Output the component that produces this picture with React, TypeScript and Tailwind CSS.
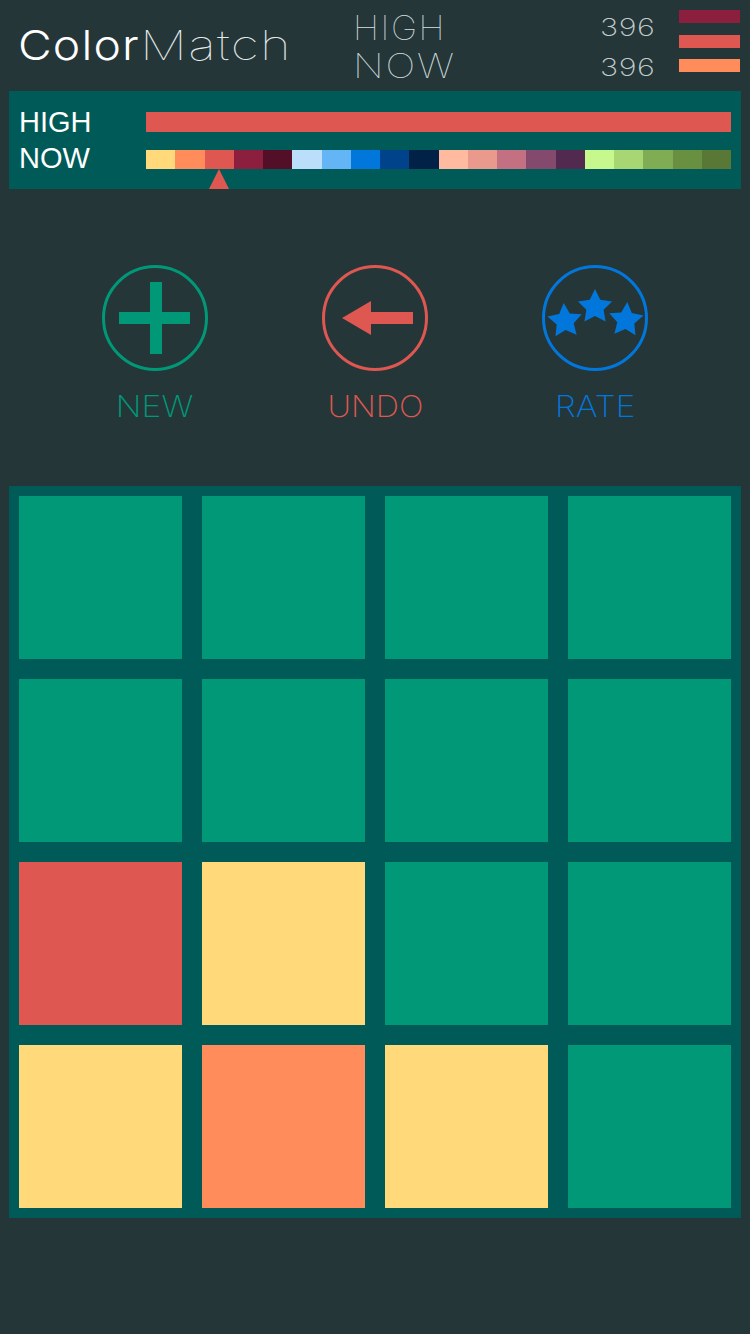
const STRIP = [
  "#ffd97a", "#ff8c5a", "#de5750", "#8c1f3d", "#530f28",
  "#bbdefb", "#64b5f6", "#0277db", "#01438a", "#012147",
  "#ffba9f", "#e99a8c", "#c27082", "#834a6e", "#522a50",
  "#c7f88e", "#a8d672", "#80ac54", "#689040", "#5a7835",
];

const GREEN = "#009877";
const RED = "#de5750";
const YELLOW = "#ffd97a";
const ORANGE = "#ff8c5a";

const BOARD = [
  GREEN, GREEN, GREEN, GREEN,
  GREEN, GREEN, GREEN, GREEN,
  RED, YELLOW, GREEN, GREEN,
  YELLOW, ORANGE, YELLOW, GREEN,
];

function starPoints(cx: number, cy: number, r: number, rot: number): string {
  const pts: string[] = [];
  for (let i = 0; i < 10; i++) {
    const rad = i % 2 === 0 ? r : r * 0.5;
    const a = ((-90 + rot + i * 36) * Math.PI) / 180;
    pts.push(`${(cx + rad * Math.cos(a)).toFixed(1)},${(cy + rad * Math.sin(a)).toFixed(1)}`);
  }
  return pts.join(" ");
}

function Ring({ color, children }: { color: string; children: React.ReactNode }) {
  return (
    <svg width="106" height="106" viewBox="0 0 106 106" className="block">
      <circle cx="53" cy="53" r="51.5" fill="none" stroke={color} strokeWidth="3" />
      {children}
    </svg>
  );
}

export default function App() {
  return (
    <div className="w-[750px] h-[1334px] bg-[#253639] overflow-hidden font-['Inter','Liberation_Sans',sans-serif]">
      {/* top bar */}
      <div className="h-[91px] flex">
        <div className="w-[353px] pl-[18px] pt-[20px] text-[41px] leading-[50px] tracking-[1px] text-white whitespace-nowrap flex">
          <span className="block w-[122px] origin-left scale-x-[1.13] font-light">Color</span>
          <span className="block origin-left scale-x-[1.28] font-thin text-[#e4eaea]">Match</span>
        </div>
        <div className="w-[247px] pt-[9px] text-[34px] leading-[38px] tracking-[1.5px] font-thin text-[#d9e0e0]">
          <div className="origin-left scale-x-[1.04]">HIGH</div>
          <div className="origin-left scale-x-[1.17]">NOW</div>
        </div>
        <div className="w-[79px] pt-[7px] text-[25px] leading-[40px] tracking-[0.5px] font-extralight text-[#c3cccc]">
          <div className="origin-left scale-x-[1.22]">396</div>
          <div className="origin-left scale-x-[1.22]">396</div>
        </div>
        <div className="w-[61px] pt-[10px] flex flex-col">
          <div className="h-[13px] bg-[#8c1f3d]" />
          <div className="h-[13px] mt-[12px] bg-[#de5750]" />
          <div className="h-[13px] mt-[11px] bg-[#ff8c5a]" />
        </div>
      </div>

      {/* progress panel */}
      <div className="relative mx-[9px] h-[98px] bg-[#005a58] flex">
        <div className="w-[137px] pl-[10px] pt-[13px] text-[29px] leading-[36px] text-white font-['Liberation_Sans',sans-serif]">
          <div>HIGH</div>
          <div>NOW</div>
        </div>
        <div className="w-[585px] pt-[21px]">
          <div className="h-[20px] bg-[#de5750]" />
          <div className="h-[19px] mt-[18px] flex">
            {STRIP.map((c) => (
              <div key={c} className="flex-1" style={{ backgroundColor: c }} />
            ))}
          </div>
        </div>
        <svg width="20" height="20" viewBox="0 0 20 20" className="absolute left-[200px] top-[78px]">
          <polygon points="10,0 20,20 0,20" fill="#de5750" />
        </svg>
      </div>

      {/* buttons */}
      <div className="pt-[76px] flex justify-center gap-[114px]">
        <div className="w-[106px] flex flex-col items-center">
          <Ring color="#009877">
            <rect x="17" y="47" width="71" height="12" fill="#009877" />
            <rect x="48" y="17" width="12" height="72" fill="#009877" />
          </Ring>
          <div className="mt-[17px] text-[30px] leading-[36px] font-extralight text-[#009877] whitespace-nowrap scale-x-[1.12]">NEW</div>
        </div>
        <div className="w-[106px] flex flex-col items-center">
          <Ring color="#de5750">
            <polygon points="20,53 49,36 49,47 91,47 91,59 49,59 49,70" fill="#de5750" />
          </Ring>
          <div className="mt-[17px] text-[30px] leading-[36px] font-extralight text-[#de5750] whitespace-nowrap scale-x-[1.08]">UNDO</div>
        </div>
        <div className="w-[106px] flex flex-col items-center">
          <Ring color="#0277db">
            <polygon points={starPoints(23, 56, 18, -4)} fill="#0277db" />
            <polygon points={starPoints(53, 42, 18, 0)} fill="#0277db" />
            <polygon points={starPoints(84, 55, 18, 4)} fill="#0277db" />
          </Ring>
          <div className="mt-[17px] text-[30px] leading-[36px] font-extralight text-[#0277db] whitespace-nowrap scale-x-[1.11]">RATE</div>
        </div>
      </div>

      {/* board */}
      <div className="mx-[9px] mt-[62px] p-[10px] bg-[#005a58] grid grid-cols-4 gap-[20px]">
        {BOARD.map((c, i) => (
          <div key={i} className="h-[163px]" style={{ backgroundColor: c }} />
        ))}
      </div>
    </div>
  );
}
